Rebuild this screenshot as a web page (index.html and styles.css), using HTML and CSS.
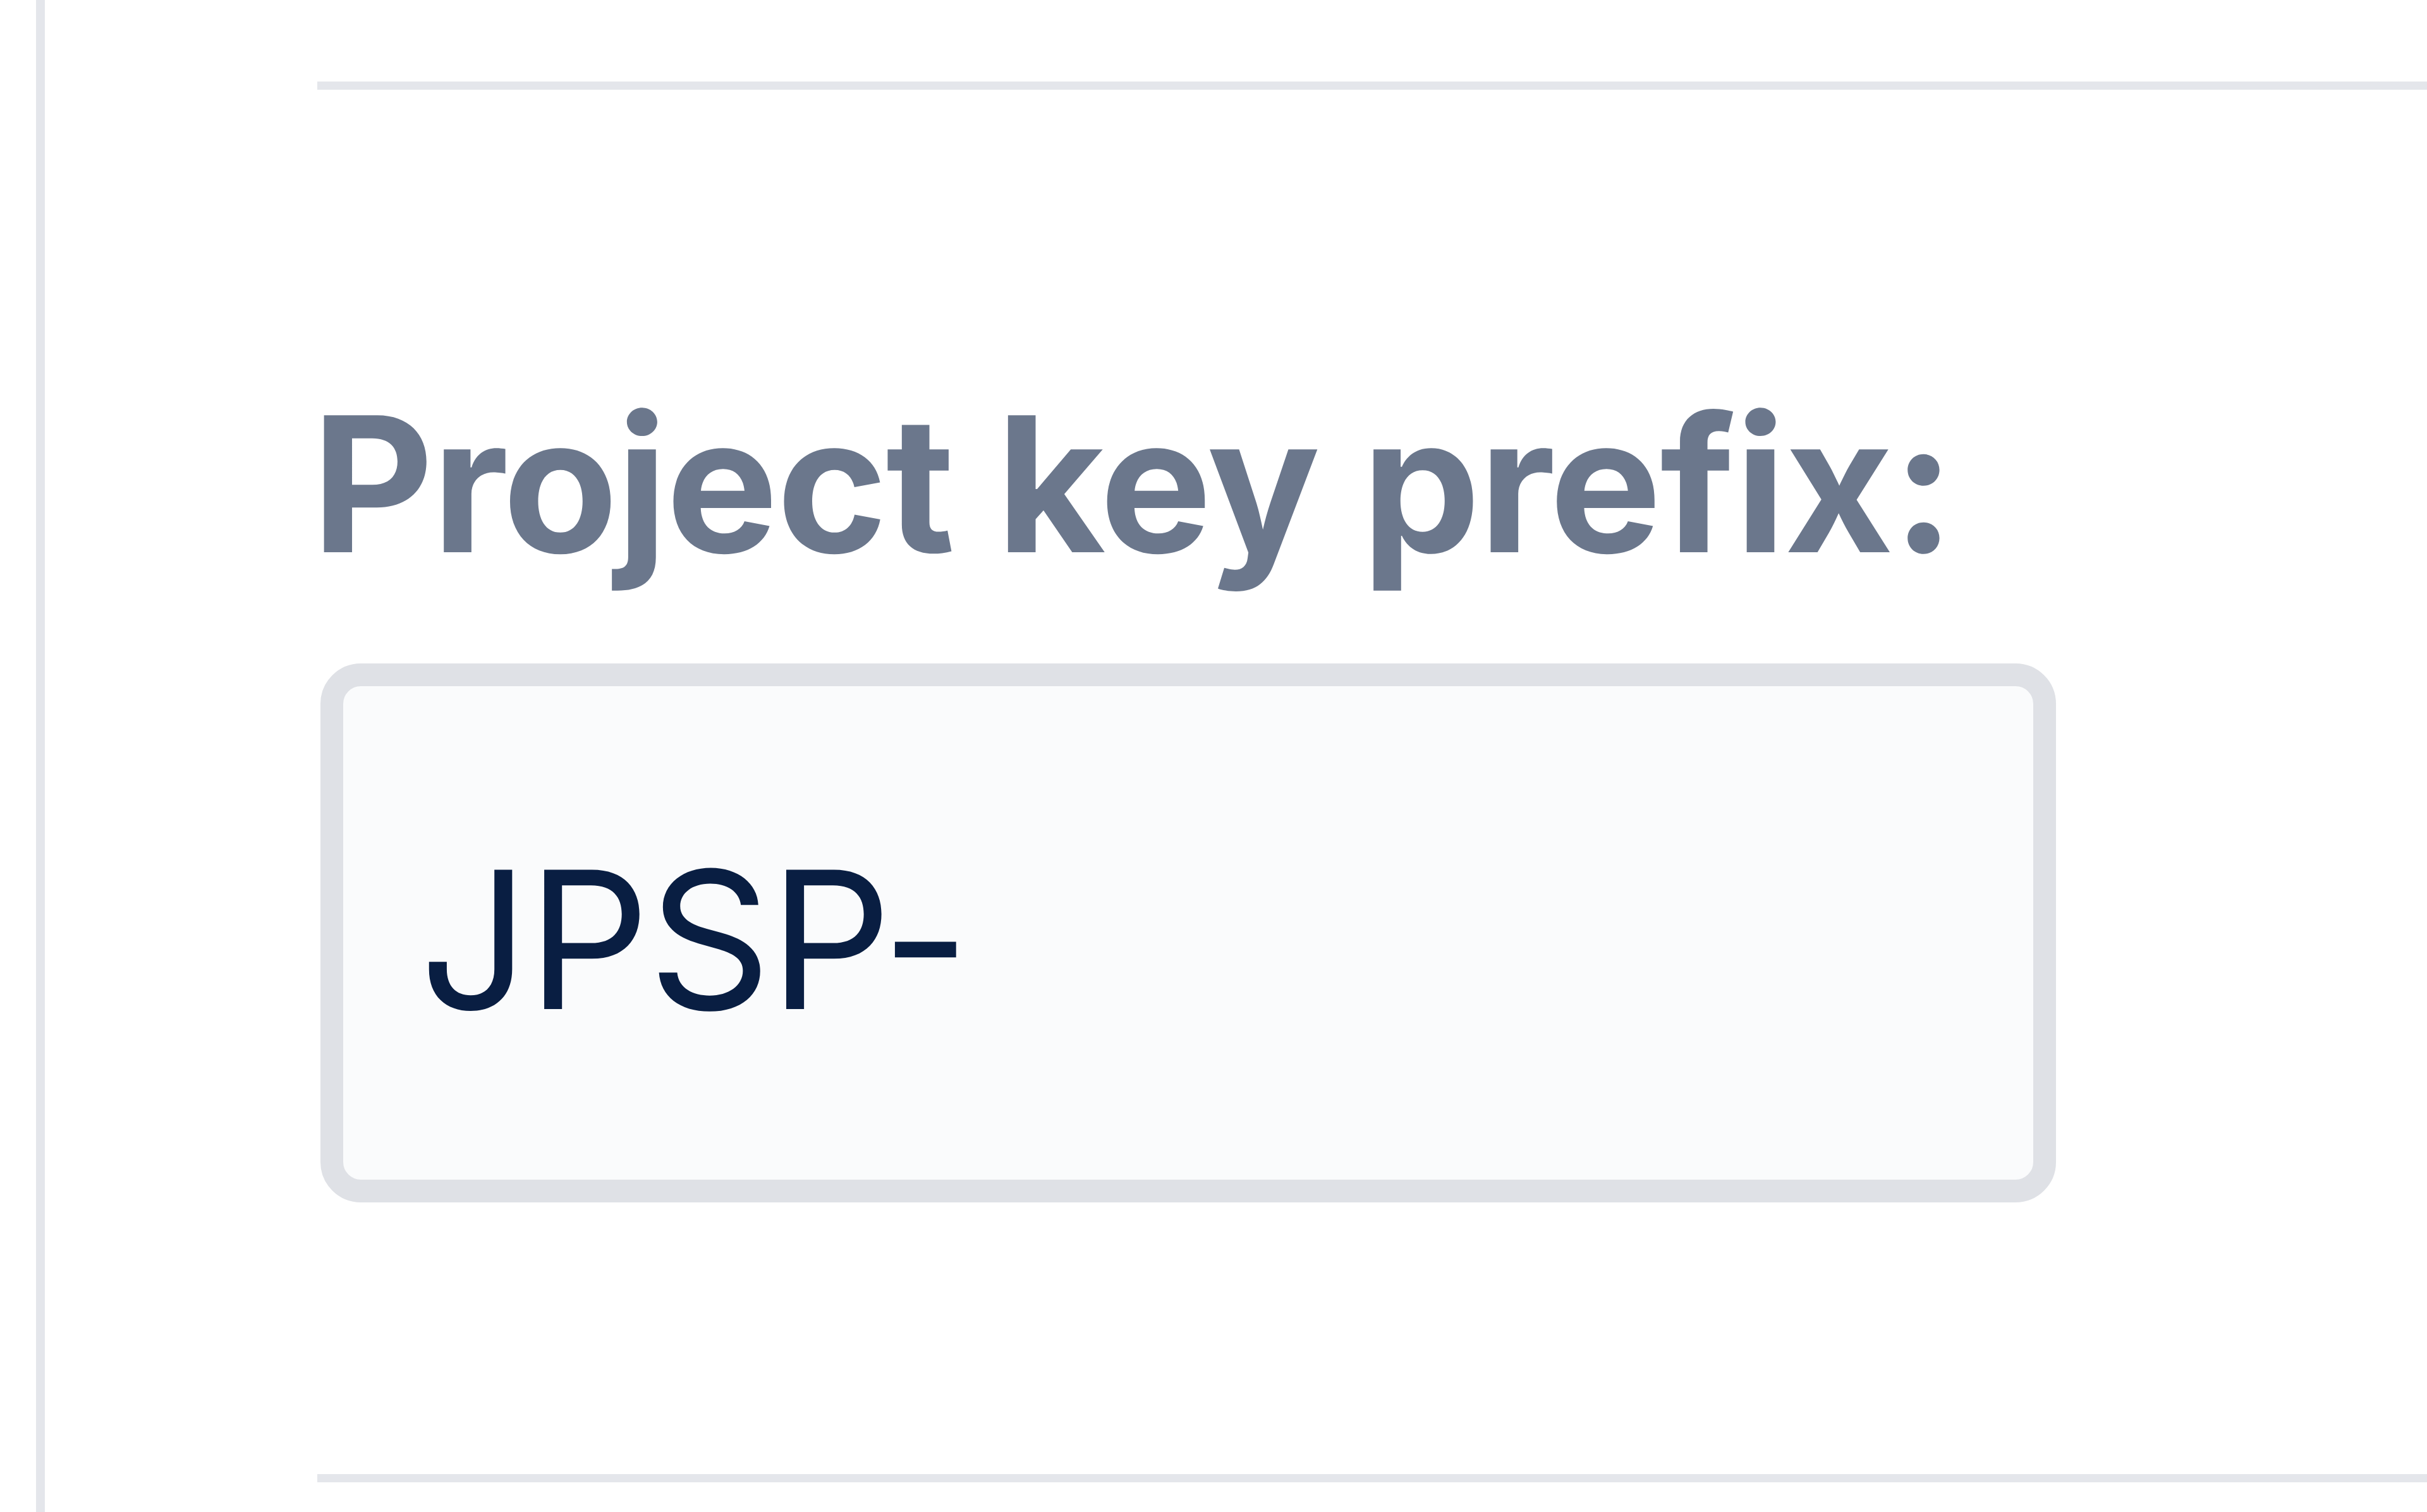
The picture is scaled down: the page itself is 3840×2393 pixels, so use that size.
FILE: index.html
```html
<!DOCTYPE html>
<html lang="en">
<head>
<meta charset="utf-8">
<title>Project key prefix</title>
<link rel="stylesheet" href="styles.css">
</head>
<body>
<div class="frame">
  <div class="content">
    <div class="section">
      <label class="field-label" for="prefix">Project key prefix:</label>
      <div class="field" id="prefix">JPSP-</div>
    </div>
  </div>
</div>
</body>
</html>
```
FILE: styles.css
```css
html, body {
  margin: 0;
  padding: 0;
  background: #ffffff;
}

body {
  width: 3840px;
  height: 2393px;
  overflow: hidden;
}

.frame {
  height: 100%;
  padding-left: 57px;
  box-sizing: border-box;
}

.content {
  height: 100%;
  border-left: 14px solid #e4e6eb;
  padding-left: 431px;
  padding-top: 129px;
  box-sizing: border-box;
}

.section {
  border-top: 13px solid #e4e6eb;
  border-bottom: 13px solid #e4e6eb;
  padding-top: 475px;
  padding-bottom: 430px;
  display: flex;
  flex-direction: column;
  align-items: flex-start;
}

.field-label {
  display: block;
  margin-left: -9px;
  font-family: "Inter", "Liberation Sans", sans-serif;
  font-weight: 700;
  font-size: 298px;
  letter-spacing: -2.5px;
  line-height: 1;
  color: #6b778c;
}

.field {
  margin-top: 135px;
  margin-left: 5px;
  width: 2746px;
  height: 853px;
  box-sizing: border-box;
  border: 36px solid #dfe1e6;
  border-radius: 64px;
  background: #fafbfc;
  display: flex;
  align-items: center;
  padding-left: 121px;
  padding-top: 20px;
  font-family: "Inter", "Liberation Sans", sans-serif;
  font-weight: 400;
  font-size: 303px;
  letter-spacing: -2.5px;
  line-height: 1;
  color: #091e42;
}
```
